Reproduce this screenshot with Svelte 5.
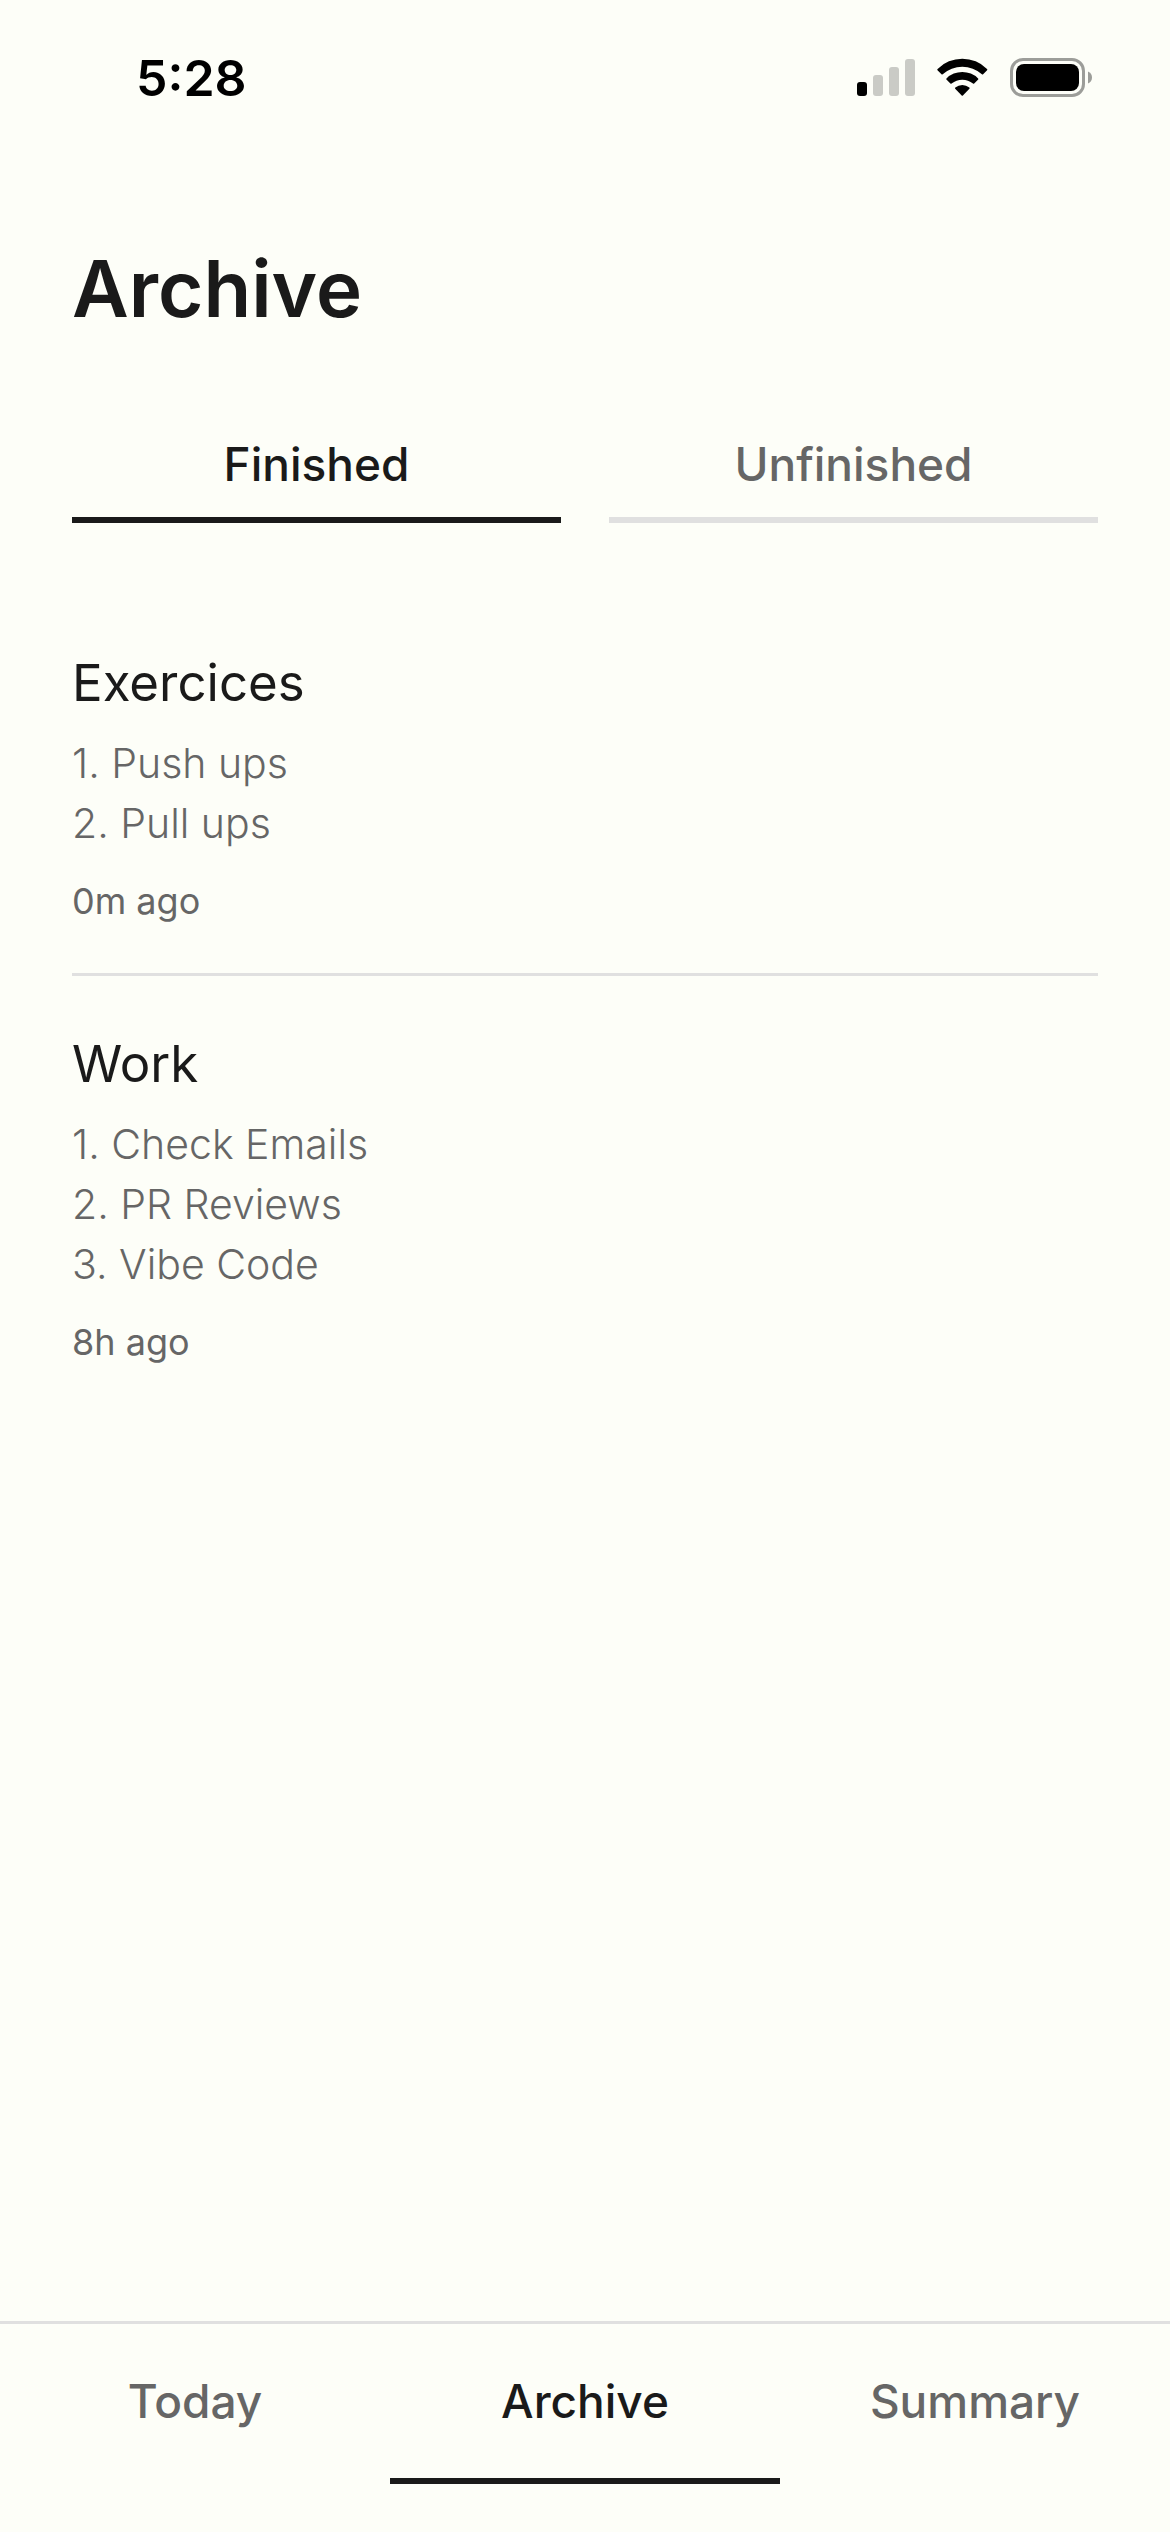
<script>
  const views = ['Finished', 'Unfinished'];
  const pages = ['Today', 'Archive', 'Summary'];

  const archive = {
    Finished: [
      { title: 'Exercices', steps: ['Push ups', 'Pull ups'], age: '0m ago' },
      { title: 'Work', steps: ['Check Emails', 'PR Reviews', 'Vibe Code'], age: '8h ago' }
    ],
    Unfinished: []
  };

  let view = $state('Finished');
  let page = $state('Archive');
</script>

<div class="screen">
  <header class="status">
    <time>5:28</time>
    <div class="indicators">
      <svg width="58" height="40" viewBox="0 0 58 40" role="img" aria-label="Signal: one bar">
        <rect x="0" y="24" width="10" height="14" rx="3" />
        <g fill="#cacbc6">
          <rect x="16" y="17" width="10" height="21" rx="3" />
          <rect x="32" y="9" width="10" height="29" rx="3" />
          <rect x="48" y="1" width="10" height="37" rx="3" />
        </g>
      </svg>
      <svg width="51" height="40" viewBox="0 -1 51 40" role="img" aria-label="Wi-Fi">
        <path d="M.5 11.2Q0 10.5.6 9.9A35 35 0 0 1 50 9.900Q50.600 10.500 50.100 11.200L46.100 15.200Q45.500 15.700 44.900 15.200A29.700 29.700 0 0 0 5.700 15.200Q5.100 15.700 4.500 15.200Z" />
        <path d="M9.400 20.600Q8.900 20 9.500 19.400A22.500 22.500 0 0 1 41.100 19.400Q41.700 20 41.200 20.600L37.200 24.600Q36.600 25.100 36 24.600A17 17 0 0 0 14.600 24.600Q14 25.100 13.400 24.600Z" />
        <path d="M18.200 29.800Q17.700 29.200 18.300 28.600A11 11 0 0 1 32.300 28.600Q32.900 29.200 32.400 29.800L25.900 36.400Q25.300 37 24.700 36.400Z" />
      </svg>
      <svg width="82" height="40" viewBox="0 0 82 40" role="img" aria-label="Battery full">
        <rect x="1.500" y="1.500" width="72" height="36" rx="11.500" fill="none" stroke="#9c9d99" stroke-width="3" />
        <rect x="6" y="6" width="63" height="27" rx="8" />
        <path d="M78 13.500C80.500 14.500 82 16.800 82 19.500S80.500 24.500 78 25.500Z" fill="#9c9d99" />
      </svg>
    </div>
  </header>

  <main>
    <h1>Archive</h1>

    <div class="tabs" role="tablist">
      {#each views as name}
        <button role="tab" aria-selected={view === name} onclick={() => (view = name)}>{name}</button>
      {/each}
    </div>

    <div class="entries">
      {#each archive[view] as entry}
        <article>
          <h2>{entry.title}</h2>
          <ol>
            {#each entry.steps as step, i}
              <li>{i + 1}. {step}</li>
            {/each}
          </ol>
          <p>{entry.age}</p>
        </article>
      {/each}
    </div>
  </main>

  <nav>
    {#each pages as name}
      <a
        href={'#' + name.toLowerCase()}
        aria-current={page === name ? 'page' : undefined}
        onclick={() => (page = name)}>{name}</a>
    {/each}
  </nav>
</div>

<style>
  :global(body) {
    margin: 0;
    background: #fdfef8;
  }

  .screen {
    --ink: #1a1a1a;
    --muted: #666;
    --line: #e0e0e0;
    min-height: 100vh;
    display: flex;
    flex-direction: column;
    box-sizing: border-box;
    padding-bottom: 48px;
    font-family: Inter, 'Liberation Sans', sans-serif;
    color: var(--ink);
  }

  .status {
    display: flex;
    justify-content: space-between;
    padding: 48px 78px 0 136px;
    color: #000;
  }

  time {
    font-size: 50px;
    line-height: 60px;
    font-weight: 600;
  }

  .indicators {
    display: flex;
    align-items: center;
    gap: 22px;
  }

  svg {
    display: block;
  }

  main {
    flex: 1;
    padding: 133px 72px 0;
  }

  h1 {
    margin: 0 0 74px;
    font-size: 78px;
    line-height: 96px;
    font-weight: 600;
  }

  .tabs {
    display: flex;
    gap: 48px;
  }

  button {
    flex: 1;
    margin: 0;
    padding: 24px 0;
    border: 0;
    border-bottom: 6px solid var(--line);
    background: none;
    font: 500 46px/58px Inter, 'Liberation Sans', sans-serif;
    color: var(--muted);
    cursor: pointer;
  }

  button[aria-selected='true'] {
    border-color: var(--ink);
    color: var(--ink);
  }

  .entries {
    padding-top: 72px;
  }

  article {
    padding: 56px 0 50px;
  }

  article + article {
    border-top: 3px solid var(--line);
  }

  h2 {
    margin: 0 0 18px;
    font-size: 51px;
    line-height: 64px;
    font-weight: 400;
  }

  ol {
    margin: 0 0 26px;
    padding: 0;
    list-style: none;
    font-size: 41px;
    line-height: 60px;
    font-weight: 300;
    color: var(--muted);
  }

  p {
    margin: 0;
    font-size: 36px;
    line-height: 44px;
    color: var(--muted);
  }

  nav {
    display: flex;
    border-top: 3px solid var(--line);
  }

  a {
    flex: 1;
    padding: 48px 0;
    border-bottom: 6px solid transparent;
    font-size: 46px;
    line-height: 58px;
    font-weight: 500;
    text-align: center;
    text-decoration: none;
    color: var(--muted);
  }

  a[aria-current='page'] {
    border-color: var(--ink);
    color: var(--ink);
  }
</style>
